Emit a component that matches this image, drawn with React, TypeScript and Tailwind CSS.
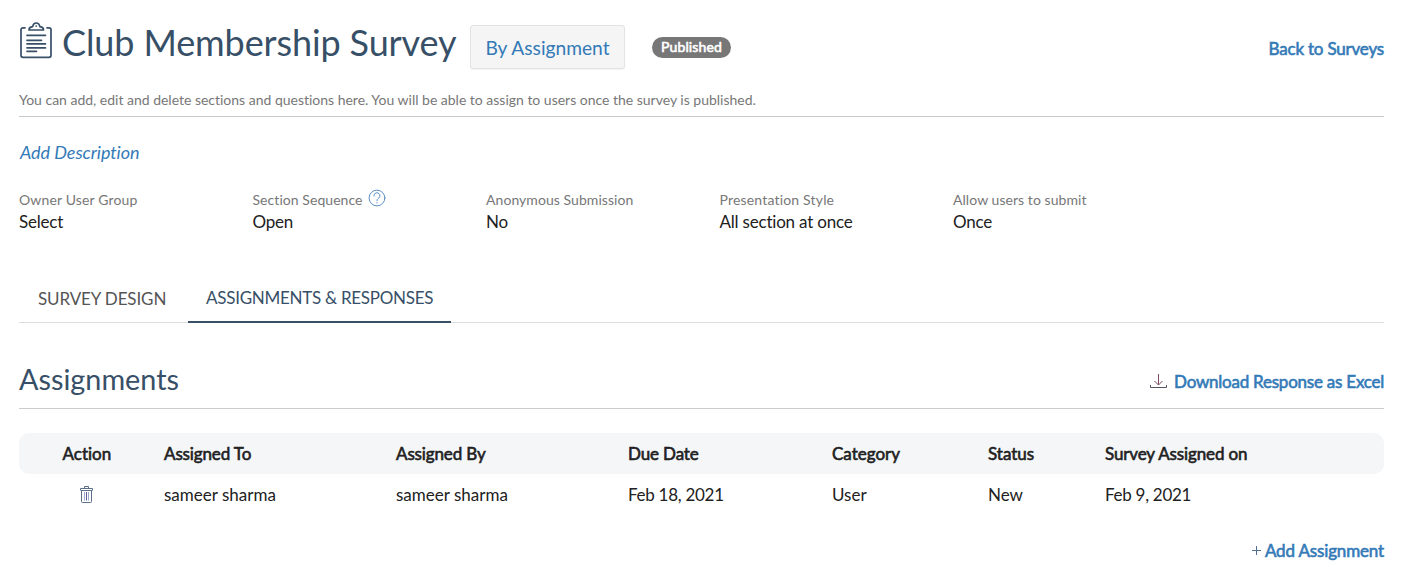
import React from "react";

const ClipboardIcon = () => (
  <svg width="32" height="37" viewBox="0 0 32 37" fill="none" stroke="#374f67" strokeWidth="1.7" strokeLinecap="round" strokeLinejoin="round">
    <path d="M5 5.800H3A2 2 0 0 0 1 7.800V33.300A2 2 0 0 0 3 35.300H29A2 2 0 0 0 31 33.300V7.800A2 2 0 0 0 29 5.800H27" />
    <path d="M9 8H23.500C23.500 6 22 5 20 4.700C19.300 2 18 1 16.200 1S13.200 2 12.500 4.700C10.500 5 9 6 9 8Z" />
    <path d="M16.200 4V4.100M7 13.300H25.500M7 18.300H21.500M7 21.800H25.500M7 25.800H25.500M7 29.300H16.500" />
  </svg>
);

const HelpIcon = () => (
  <svg width="18" height="18" viewBox="0 0 18 18" fill="none" stroke="#4a82bd" strokeWidth="0.9" strokeLinecap="round">
    <circle cx="9" cy="9" r="7.900" />
    <path d="M5.900 7A3 3 0 1 1 10.600 9.200C9.500 10 9 10.400 9 11.700M9 13.500V13.900" />
  </svg>
);

const DownloadIcon = () => (
  <svg width="17" height="15" viewBox="0 0 17 15" fill="none" strokeWidth="1">
    <path d="M8.500 0V11M4.500 7L8.500 11L12.500 7" stroke="#7d4c62" />
    <path d="M0.500 11V13.500H16.500V11" stroke="#555566" />
  </svg>
);

const TrashIcon = () => (
  <svg width="13" height="17" viewBox="0 0 13 17" fill="none" stroke="#5c6f8a" strokeWidth="1">
    <path d="M0.500 4V2.500H12.500V4M0.500 4.500H12.500M4.500 2.500V0.500H8.500V2.500M1.500 4.500V15.500Q1.500 16.500 2.500 16.500H10.500Q11.500 16.500 11.500 15.500V4.500" />
    <path d="M4.500 6V14.500M8.500 6V14.500" stroke="#9aa9cf" />
    <path d="M6.500 6V14.500" stroke="#5a5f95" />
  </svg>
);

const details = [
  ["Owner User Group", "Select"],
  ["Section Sequence", "Open"],
  ["Anonymous Submission", "No"],
  ["Presentation Style", "All section at once"],
  ["Allow users to submit", "Once"],
];

const grid = "grid grid-cols-[145px_232px_232px_204px_156px_117px_1fr] items-center";
const strong = "[-webkit-text-stroke:0.6px_currentColor]";

export default function App() {
  return (
    <main className="h-[587px] w-[1408px] overflow-hidden bg-white pl-[19px] pr-6 font-['Lato',sans-serif] text-base text-[#212121] [font-variant-ligatures:none]">
      <header className="flex h-[88px] items-start text-[#374f67]">
        <div className="mt-[22px] ml-px"><ClipboardIcon /></div>
        <h1 className="mt-[21px] ml-[10px] w-[408px] whitespace-nowrap text-[36px] leading-[43px] tracking-[-0.11px]">Club Membership Survey</h1>
        <button className="mt-[25px] h-[44px] w-[155px] rounded-[3px] border border-[#e3e3e3] bg-[#f5f5f5] pt-[2px] text-[19.200px] whitespace-nowrap text-[#337ab7] shadow-[0_1px_1px_rgba(0,0,0,0.05)]">By Assignment</button>
        <span className={"mt-[37px] ml-[27px] h-[21px] w-[79px] rounded-full bg-[#777] text-center text-[14px] leading-[20px] tracking-[0.15px] text-white " + strong}>Published</span>
        <a className={"mt-[37px] ml-auto text-[17px] leading-6 tracking-[-0.2px] text-[#337ab7] " + strong}>Back to Surveys</a>
      </header>
      <div className="h-[29px] border-b border-[#c8c8c8] pt-[2px] text-[14px] leading-5 tracking-[-0.01px] text-[#777]">You can add, edit and delete sections and questions here. You will be able to assign to users once the survey is published.</div>
      <div className="h-[72px] pt-[23px] pl-px text-[18px] leading-6 tracking-[-0.05px] text-[#337ab7] italic">Add Description</div>
      <dl className="grid h-[93px] grid-cols-[repeat(5,233.500px)]">
        {details.map(([label, value], i) => (
          <div key={label}>
            <dt className={"flex h-[21px] items-center text-[14px] leading-[21px] text-[#777] " + (i === 0 ? "tracking-[0.15px]" : i === 3 ? "tracking-[0.18px]" : "tracking-[0.06px]")}>
              {label}
              {i === 1 && <span className="-mt-[4px] ml-[5px]"><HelpIcon /></span>}
            </dt>
            <dd className="text-[17px] leading-6 tracking-[-0.2px]">{value}</dd>
          </div>
        ))}
      </dl>
      <nav className="flex h-[41px] border-b border-[#ddd] text-[17px] whitespace-nowrap">
        <a className="w-[169px] pt-[5px] pl-[19px] leading-6 tracking-[-0.12px] text-[#555]">SURVEY DESIGN</a>
        <a className="h-[41px] w-[263px] border-b-2 border-[#374f67] pt-1 pl-[18px] leading-6 tracking-[-0.27px] text-[#374f67]">ASSIGNMENTS &amp; RESPONSES</a>
      </nav>
      <section>
        <div className="flex h-[86px] border-b border-[#ccc]">
          <h2 className="mt-[38px] text-[28.800px] leading-9 text-[#374f67]">Assignments</h2>
          <a className="mt-[47px] ml-auto flex items-center self-start text-[17px] leading-6 text-[#337ab7]">
            <span className="mr-[7px] -mt-[2px]"><DownloadIcon /></span>
            <span className={"tracking-[-0.23px] " + strong}>Download Response as Excel</span>
          </a>
        </div>
        <div className="mt-6 text-[17px] leading-6">
          <div className={grid + " h-[41px] rounded-[10px] bg-[#f4f6f8] tracking-[-0.13px] " + strong}>
            <span className="pl-[43.500px] tracking-normal">Action</span><span>Assigned To</span><span>Assigned By</span><span>Due Date</span><span className="tracking-normal">Category</span><span className="tracking-normal">Status</span><span>Survey Assigned on</span>
          </div>
          <div className={grid + " h-[41px]"}>
            <span className="pl-[61px]"><TrashIcon /></span><span>sameer sharma</span><span>sameer sharma</span><span className="tracking-[-0.28px]">Feb 18, 2021</span><span>User</span><span>New</span><span className="tracking-[-0.28px]">Feb 9, 2021</span>
          </div>
        </div>
        <div className="mt-6 flex items-center justify-end text-[17px] leading-6 text-[#337ab7]">
          <svg className="mr-[4px] -mt-[2px]" width="9" height="9" viewBox="0 0 9 9" stroke="#526f91"><path d="M0 4.500H9M4.500 0V9" /></svg>
          <span className={"tracking-[-0.15px] " + strong}>Add Assignment</span>
        </div>
      </section>
    </main>
  );
}
